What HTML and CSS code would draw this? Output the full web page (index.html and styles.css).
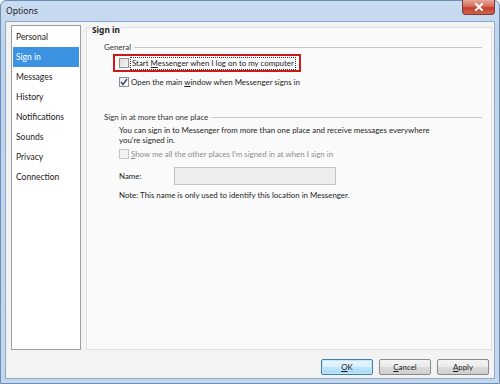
FILE: index.html
```html
<!DOCTYPE html>
<html>
<head>
<meta charset="utf-8">
<link rel="stylesheet" href="styles.css">
</head>
<body>
<div class="window">
  <div class="titlebar">
    <span class="title">Options</span>
    <div class="close"><svg width="10" height="8" viewBox="0 0 10 8"><path d="M2 1 L8 7 M8 1 L2 7" stroke="#fff" stroke-width="2" stroke-linecap="square"/></svg></div>
  </div>
  <div class="client">
    <div class="main">
      <ul class="nav">
        <li>Personal</li>
        <li class="sel">Sign in</li>
        <li>Messages</li>
        <li>History</li>
        <li>Notifications</li>
        <li>Sounds</li>
        <li>Privacy</li>
        <li>Connection</li>
      </ul>
      <div class="panel">
        <div class="panel-head"><span class="legend">Sign in</span></div>
        <div class="group">
          <div class="group-title"><span>General</span></div>
          <div class="opt highlight">
            <span class="cb"></span>
            <span class="focus">Start <u>M</u>essenger when I log on to my computer</span>
          </div>
          <div class="opt">
            <span class="cb checked"><svg width="8" height="8" viewBox="0 0 8 8"><path d="M1 4 L3 6.5 L7 1" fill="none" stroke="#3a4a6a" stroke-width="1.4"/></svg></span>
            <span>Open the main <u>w</u>indow when Messenger signs in</span>
          </div>
        </div>
        <div class="group group2">
          <div class="group-title"><span>Sign in at more than one place</span></div>
          <p class="desc">You can sign in to Messenger from more than one place and receive messages everywhere<br>you're signed in.</p>
          <div class="opt disabled">
            <span class="cb"></span>
            <span><u>S</u>how me all the other places I'm signed in at when I sign in</span>
          </div>
          <div class="name-row">
            <span class="name-label">Name:</span>
            <span class="input"></span>
          </div>
          <p class="note">Note: This name is only used to identify this location in Messenger.</p>
        </div>
      </div>
    </div>
    <div class="buttons">
      <button class="btn default"><u>O</u>K</button>
      <button class="btn"><u>C</u>ancel</button>
      <button class="btn"><u>A</u>pply</button>
    </div>
  </div>
</div>
</body>
</html>
```
FILE: styles.css
```css
* { box-sizing: border-box; }
html, body { margin: 0; padding: 0; }
body {
  width: 500px;
  height: 384px;
  background: #ffffff;
  font-family: Lato, "Noto Sans", sans-serif;
  font-size: 7.9px;
  color: #1e1e1e;
  overflow: hidden;
}
.window {
  position: relative;
  width: 500px;
  height: 384px;
  border: 1px solid #6f8db3;
  border-radius: 6px 6px 0 0;
  background: linear-gradient(180deg, #cadcf1 0%, #bdd3ec 12%, #c4d7ee 100%);
  padding: 0 4px 4px 4px;
  display: flex;
  flex-direction: column;
}
.titlebar {
  height: 20px;
  display: flex;
  align-items: center;
  padding-left: 1px;
}
.title {
  font-family: "Noto Sans", sans-serif;
  font-size: 8.6px;
  color: #1b1b1b;
}
.close {
  position: absolute;
  top: -1px;
  right: 4px;
  width: 33px;
  height: 15px;
  border: 1px solid #7a3a3a;
  border-top: none;
  border-radius: 0 0 4px 4px;
  background: linear-gradient(180deg, #e8a89b 0%, #d56e5c 45%, #c2402c 55%, #d0644d 100%);
  display: flex;
  align-items: center;
  justify-content: center;
}
.client {
  flex: 1;
  border: 1px solid #8fa9c8;
  background: #f3f3f3;
  display: flex;
  flex-direction: column;
  padding: 3px 2px 3px 5px;
}
.main {
  display: flex;
  gap: 5px;
  height: 325px;
  flex: none;
}
.nav {
  list-style: none;
  margin: 0;
  padding: 1px;
  width: 70px;
  background: #fff;
  border: 1px solid #9a9ea6;
  font-size: 8.5px;
}
.nav li {
  height: 20px;
  line-height: 20px;
  padding-left: 3px;
  color: #1a1a1a;
}
.nav li.sel {
  background: #3c93e2;
  color: #fff;
}
.panel {
  flex: 1;
  margin-top: 2px;
  border: 1px solid #e0e0e0;
  background: #fafafa;
  padding: 0 0 0 5px;
}
.panel-head {
  height: 12px;
  margin-top: -4px;
}
.legend {
  font-family: "Noto Sans", sans-serif;
  font-weight: bold;
  font-size: 8.4px;
  background: #f6f6f6;
  padding: 0 1px 0 0;
  line-height: 12px;
  display: inline-block;
}
.group {
  padding-left: 12px;
  margin-top: 5px;
}
.group2 { margin-top: 19px; }
.group-title {
  display: flex;
  align-items: center;
  color: #333;
  height: 12px;
  padding-right: 9px;
}
.group-title::after {
  content: "";
  flex: 1;
  height: 1px;
  background: #c9c9c9;
  margin-left: 3px;
}
.opt {
  display: flex;
  align-items: center;
  gap: 2px;
  height: 20px;
  padding-left: 15px;
  white-space: nowrap;
}
.opt.highlight {
  margin-left: 9px;
  padding-left: 4px;
  width: 188px;
  height: 18px;
  margin-top: 1px;
  border: 2px solid #cc1a1a;
}
.cb {
  width: 10px;
  height: 10px;
  border: 1px solid #8f8f8f;
  background: linear-gradient(135deg, #dcdcdc, #f6f6f6);
  display: inline-flex;
  align-items: center;
  justify-content: center;
  flex: none;
}
.cb.checked { background: linear-gradient(135deg, #e4e8ee, #fafbfc); }
.focus {
  outline: 1px dotted #333;
  padding: 0 1px;
  line-height: 11px;
}
.opt.disabled { color: #8d8d8d; height: 18px; }
.opt.disabled .cb { border-color: #c6c6c6; background: #f2f2f2; }
.desc {
  margin: 2px 0 0 15px;
  line-height: 10px;
  white-space: nowrap;
}
.name-row {
  display: flex;
  align-items: center;
  padding-left: 15px;
  height: 22px;
  margin-top: 2px;
}
.name-label { width: 55px; }
.input {
  width: 162px;
  height: 18px;
  border: 1px solid #c2c2c2;
  background: #eeeeee;
}
.note {
  margin: 2px 0 0 15px;
  line-height: 12px;
}
.buttons {
  display: flex;
  justify-content: flex-end;
  gap: 6px;
  padding-top: 9px;
  padding-right: 3px;
}
.btn {
  width: 52px;
  height: 16px;
  font-family: Lato, "Noto Sans", sans-serif;
  font-size: 7.9px;
  padding: 0;
  border: 1px solid #8a8a8a;
  border-radius: 2px;
  background: linear-gradient(180deg, #f4f4f4 0%, #ebebeb 50%, #dcdcdc 50%, #cfcfcf 100%);
  color: #1a1a1a;
  line-height: 14px;
}
.btn.default {
  border-color: #3c7fb1;
  background: linear-gradient(180deg, #eaf6fd 0%, #d9f0fc 50%, #bee6fd 50%, #a7d9f5 100%);
  box-shadow: inset 0 0 0 1px #c5e6f8;
}
```
